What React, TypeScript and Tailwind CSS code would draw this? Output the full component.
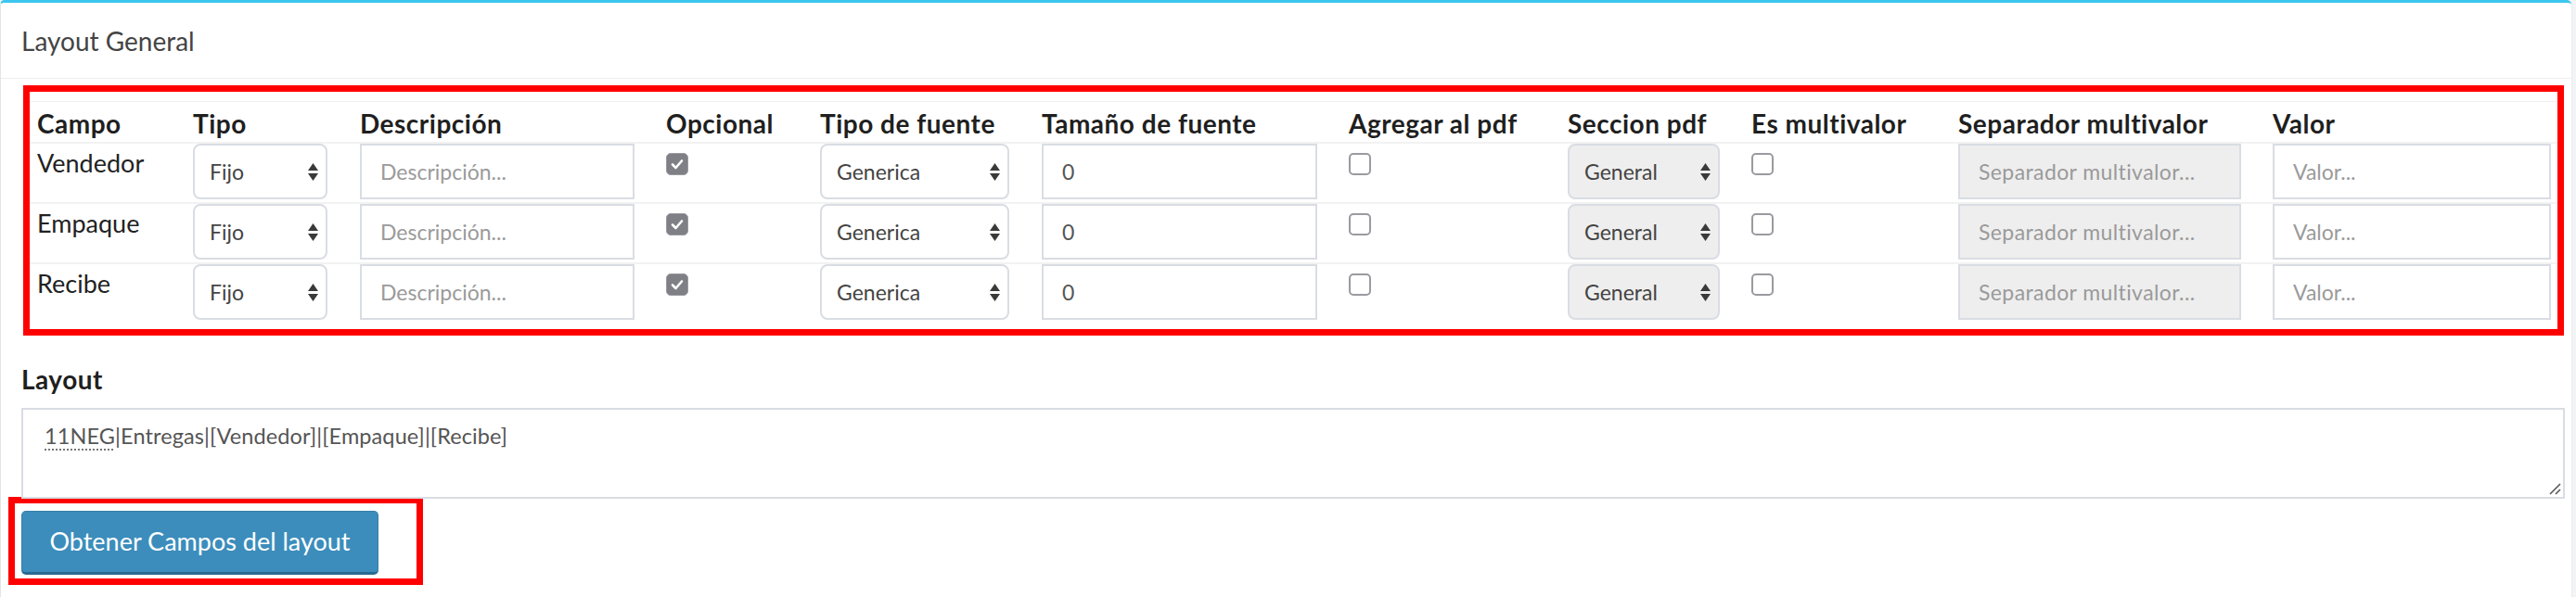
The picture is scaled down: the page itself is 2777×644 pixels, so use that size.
import React from "react";

const COLS =
  "grid grid-cols-[159px_180px_330px_166px_239px_331px_236px_198px_223px_339px_324px]";

function Arrows() {
  return (
    <svg width="11" height="19" viewBox="0 0 11 19" className="shrink-0">
      <polygon points="0,8 5.5,0 11,8" fill="#3a3a3a" />
      <polygon points="0,11 5.5,19 11,11" fill="#3a3a3a" />
    </svg>
  );
}

function Select({ value, className }: { value: string; className: string }) {
  return (
    <div
      className={
        "h-[60px] rounded-[8px] border-2 border-[#d9dde3] flex items-center justify-between pl-[16px] pr-[8px] text-[23px] text-[#444] " +
        className
      }
    >
      <span>{value}</span>
      <Arrows />
    </div>
  );
}

function Field({
  text,
  placeholder,
  className,
}: {
  text?: string;
  placeholder?: string;
  className: string;
}) {
  return (
    <div
      className={
        "h-[60px] border-2 border-[#d9dde3] flex items-center pl-[20px] text-[23px] whitespace-nowrap overflow-hidden " +
        className
      }
    >
      {text ? (
        <span className="text-[#555]">{text}</span>
      ) : (
        <span className="text-[#9a9a9a]">{placeholder}</span>
      )}
    </div>
  );
}

function Check({ checked }: { checked?: boolean }) {
  if (checked) {
    return (
      <div className="mt-[10px] w-[24px] h-[24px] rounded-[5px] bg-[#7f7f86] border border-[#9a9aa0] flex items-center justify-center">
        <svg width="16" height="16" viewBox="0 0 16 16">
          <polyline
            points="3,8.5 6.5,12 13,4.5"
            fill="none"
            stroke="white"
            strokeWidth="2.6"
            strokeLinecap="round"
            strokeLinejoin="round"
          />
        </svg>
      </div>
    );
  }
  return (
    <div className="mt-[10px] w-[24px] h-[24px] rounded-[5px] bg-white border-2 border-[#9a9aa0]" />
  );
}

const headers = [
  "Campo",
  "Tipo",
  "Descripción",
  "Opcional",
  "Tipo de fuente",
  "Tamaño de fuente",
  "Agregar al pdf",
  "Seccion pdf",
  "Es multivalor",
  "Separador multivalor",
  "Valor",
];

const rows = ["Vendedor", "Empaque", "Recibe"];

export default function App() {
  return (
    <div className="w-[2777px] h-[644px] overflow-hidden bg-[#f3f4f6] font-['Lato',sans-serif]">
      <div className="mr-[5px] h-[700px] bg-white border-t-[3px] border-t-[#3cc6ef] border-l border-l-[#e4e4e4] rounded-t-[5px] shadow-[0_1px_2px_rgba(0,0,0,0.12)]">
        <div className="h-[82px] flex items-center pl-[22px] border-b border-b-[#eeeeee] text-[28px] text-[#444]">
          Layout General
        </div>
        <div className="pt-[7px] pl-[22px] pr-[7px]">
          <div className="ml-[2px] mr-[1px] border-[7px] border-[#ff0000] pt-[10px] pb-[7px]">
            <div
              className={
                COLS +
                " h-[44px] border-t border-t-[#f0f0f0] items-end text-[28px] tracking-[0.5px] font-bold text-[#1f1f1f] leading-[36px]"
              }
            >
              {headers.map((h, i) => (
                <div
                  key={h}
                  className={(i === 0 ? "pl-[8px]" : "pl-[17px]") + " pb-[2px] whitespace-nowrap"}
                >
                  {h}
                </div>
              ))}
            </div>
            {rows.map((r) => (
              <div
                key={r}
                className={
                  COLS +
                  " h-[65px] border-t-2 border-t-[#f2f2f2] items-start text-[27px] text-[#222] leading-[36px]"
                }
              >
                <div className="pl-[8px] pt-[3px]">{r}</div>
                <div className="pl-[17px]">
                  <Select value="Fijo" className="w-[145px] bg-white" />
                </div>
                <div className="pl-[17px]">
                  <Field placeholder="Descripción..." className="w-[296px] bg-white" />
                </div>
                <div className="pl-[17px]">
                  <Check checked />
                </div>
                <div className="pl-[17px]">
                  <Select value="Generica" className="w-[204px] bg-white" />
                </div>
                <div className="pl-[17px]">
                  <Field text="0" className="w-[297px] bg-white" />
                </div>
                <div className="pl-[17px]">
                  <Check />
                </div>
                <div className="pl-[17px]">
                  <Select value="General" className="w-[164px] bg-[#eeeeee]" />
                </div>
                <div className="pl-[17px]">
                  <Check />
                </div>
                <div className="pl-[17px]">
                  <Field
                    placeholder="Separador multivalor..."
                    className="w-[305px] bg-[#eeeeee] tracking-[0.4px]"
                  />
                </div>
                <div className="pl-[17px]">
                  <Field placeholder="Valor..." className="w-[300px] bg-white" />
                </div>
              </div>
            ))}
          </div>

          <div className="mt-[29px] text-[28px] tracking-[0.5px] font-bold leading-[36px] text-[#1f1f1f]">
            Layout
          </div>
          <div className="relative mt-[13px] h-[98px] border-2 border-[#d9dde3] pl-[23px] pt-[11px] text-[23.5px] tracking-[0.1px] leading-[34px] text-[#555]">
            <span className="underline decoration-dotted decoration-[#777] decoration-2 underline-offset-[5px]">
              11NEG
            </span>
            |Entregas|[Vendedor]|[Empaque]|[Recibe]
            <svg
              width="14"
              height="14"
              viewBox="0 0 14 14"
              className="absolute right-[2px] bottom-[2px]"
            >
              <line x1="13" y1="2" x2="2" y2="13" stroke="#555" strokeWidth="1.6" />
              <line x1="13" y1="8" x2="8" y2="13" stroke="#555" strokeWidth="1.6" />
            </svg>
          </div>

          <div className="-mt-[2px] -ml-[14px] w-[447px] border-[7px] border-[#ff0000] pt-[8px] pl-[7px] pb-[4px]">
            <div className="w-[385px] h-[69px] rounded-[5px] bg-[#3c8dbc] border border-[#367fa9] border-b-[3px] border-b-[#2a6a90] flex items-center justify-center text-[27px] text-white">
              Obtener Campos del layout
            </div>
          </div>
        </div>
      </div>
    </div>
  );
}
